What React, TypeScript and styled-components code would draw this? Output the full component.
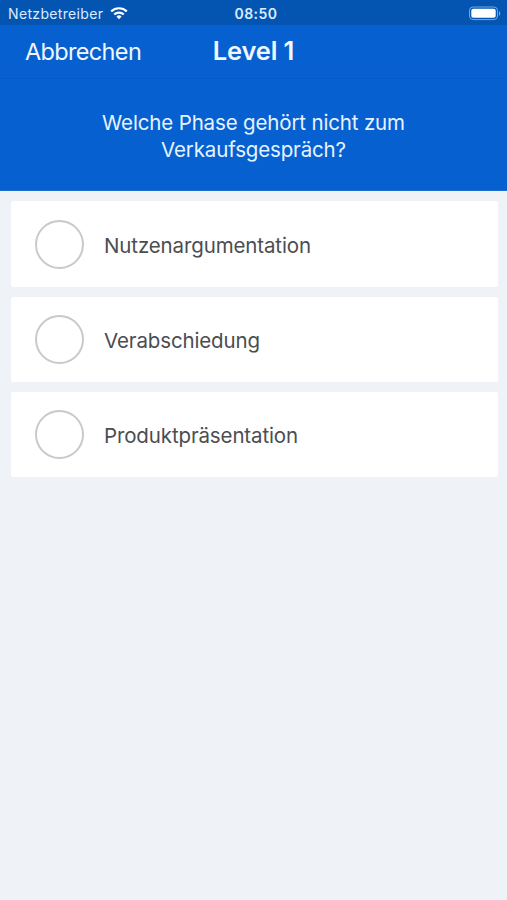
import React from "react";
import styled, { createGlobalStyle } from "styled-components";

const GlobalStyle = createGlobalStyle`
  * { box-sizing: border-box; }
  body {
    margin: 0;
    background: #eff3f8;
    font-family: Inter, "Liberation Sans", sans-serif;
  }
`;

const Screen = styled.div`
  display: flex;
  flex-direction: column;
  min-height: 900px;
  background: #eff3f8;
`;

const StatusBar = styled.div`
  display: grid;
  grid-template-columns: 1fr auto 1fr;
  align-items: center;
  height: 25px;
  padding: 2px 6px 0 8px;
  background: #0455b2;
  color: #dcecff;
  font-size: 14px;
  line-height: 20px;
`;

const Carrier = styled.div`
  display: flex;
  align-items: center;
  gap: 7px;
  letter-spacing: 0.34px;
`;

const Clock = styled.div`
  padding-left: 3px;
  font-weight: 600;
  letter-spacing: 0.5px;
`;

const BatterySlot = styled.div`
  display: flex;
  justify-content: flex-end;
`;

const NavBar = styled.header`
  display: grid;
  grid-template-columns: 1fr auto 1fr;
  align-items: center;
  height: 54px;
  padding: 0 25px;
  background: #0660cf;
  border-bottom: 1px solid #055bc8;
  color: #f0f8ff;
`;

const CancelButton = styled.button`
  justify-self: start;
  padding: 0;
  border: 0;
  background: none;
  color: inherit;
  font: 400 23.5px/30px Inter, "Liberation Sans", sans-serif;
  letter-spacing: -0.66px;
`;

const Title = styled.h1`
  margin: 0;
  padding-bottom: 1px;
  font-size: 25.5px;
  line-height: 30px;
  font-weight: 600;
  letter-spacing: -0.15px;
`;

const Question = styled.section`
  display: flex;
  justify-content: center;
  height: 112px;
  padding: 30px 80px 0;
  background: #0660cf;
  border-bottom: 1px solid #1c6dcc;
  color: #e6f3ff;
  font-size: 20.5px;
  line-height: 27px;
  letter-spacing: -0.15px;
  text-align: center;
`;

const QuestionText = styled.p`
  width: 320px;
  margin: 0;
`;

const AnswerList = styled.main`
  display: flex;
  flex-direction: column;
  gap: 9.5px;
  padding: 10.4px 9.5px 0 11px;
`;

const Answer = styled.label`
  display: flex;
  align-items: center;
  gap: 20px;
  height: 85.7px;
  padding-left: 24px;
  border-radius: 2px;
  background: #fff;
  color: #4b4d51;
  font-size: 20.5px;
  line-height: 28px;
`;

const Radio = styled.span`
  width: 49px;
  height: 49px;
  border: 2px solid #c9c9cb;
  border-radius: 50%;
`;

const AnswerText = styled.span`
  padding-top: 2.6px;
  letter-spacing: -0.13px;
`;

const answers = ["Nutzenargumentation", "Verabschiedung", "Produktpräsentation"];

const WifiIcon = () => (
  <svg width="18" height="13" viewBox="0 0 18 13" fill="none" stroke="#fff" strokeWidth="2.2">
    <path d="M1.2 4.4a11.2 11.2 0 0 1 15.6 0" />
    <path d="M4.2 7.5a6.9 6.9 0 0 1 9.6 0" />
    <path d="M9 12.2 6.4 9.6a3.7 3.7 0 0 1 5.2 0Z" fill="#fff" stroke="none" />
  </svg>
);

const BatteryIcon = () => (
  <svg width="33" height="15" viewBox="0 0 33 15">
    <rect x="1.5" y="1" width="28" height="12.6" rx="3.6" fill="none" stroke="#79a8dd" />
    <rect x="3.3" y="2.8" width="24.4" height="9" rx="2" fill="#fff" />
    <path d="M31 5.2c1.7.6 1.7 4 0 4.6Z" fill="#79a8dd" />
  </svg>
);

export default function App() {
  return (
    <Screen>
      <GlobalStyle />
      <StatusBar>
        <Carrier>
          <span>Netzbetreiber</span>
          <WifiIcon />
        </Carrier>
        <Clock>08:50</Clock>
        <BatterySlot>
          <BatteryIcon />
        </BatterySlot>
      </StatusBar>
      <NavBar>
        <CancelButton>Abbrechen</CancelButton>
        <Title>Level 1</Title>
      </NavBar>
      <Question>
        <QuestionText>
          Welche Phase gehört nicht zum
          <br />
          Verkaufsgespräch?
        </QuestionText>
      </Question>
      <AnswerList>
        {answers.map((text) => (
          <Answer key={text}>
            <Radio />
            <AnswerText>{text}</AnswerText>
          </Answer>
        ))}
      </AnswerList>
    </Screen>
  );
}
